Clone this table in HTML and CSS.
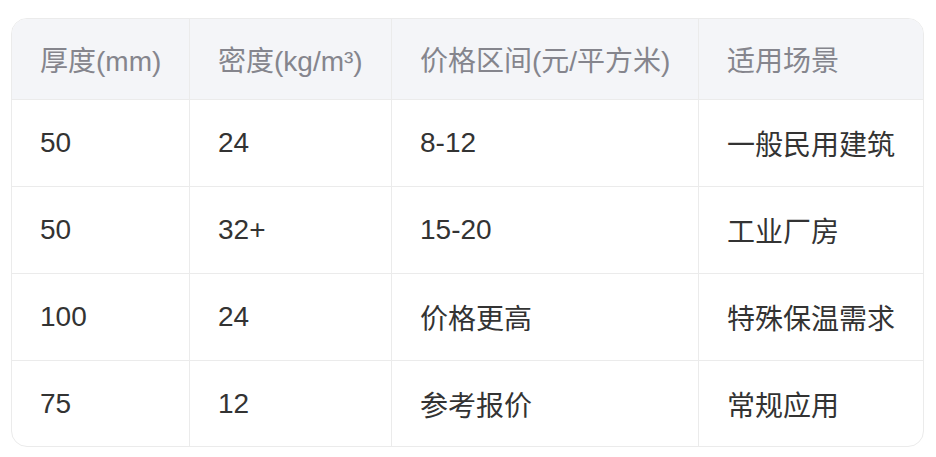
FILE: index.html
```html
<!DOCTYPE html>
<html lang="zh-CN">
<head>
<meta charset="utf-8">
<title>价格表</title>
<link rel="stylesheet" href="styles.css">
</head>
<body>
<div class="wrap">
  <div class="grid" role="table">
    <div class="cell head">厚度(mm)</div>
    <div class="cell head">密度(kg/m³)</div>
    <div class="cell head">价格区间(元/平方米)</div>
    <div class="cell head last-col">适用场景</div>

    <div class="cell">50</div>
    <div class="cell">24</div>
    <div class="cell">8-12</div>
    <div class="cell last-col">一般民用建筑</div>

    <div class="cell">50</div>
    <div class="cell">32+</div>
    <div class="cell">15-20</div>
    <div class="cell last-col">工业厂房</div>

    <div class="cell">100</div>
    <div class="cell">24</div>
    <div class="cell">价格更高</div>
    <div class="cell last-col">特殊保温需求</div>

    <div class="cell last-row">75</div>
    <div class="cell last-row">12</div>
    <div class="cell last-row">参考报价</div>
    <div class="cell last-row last-col">常规应用</div>
  </div>
</div>
</body>
</html>
```

FILE: styles.css
```css
* { box-sizing: border-box; }
html, body { margin: 0; padding: 0; background: #ffffff; }
body {
  font-family: "Liberation Sans", "Noto Sans CJK SC", sans-serif;
  font-size: 28px;
  color: #333333;
}
.wrap {
  margin: 18px 0 0 11px;
  width: 913px;
  height: 429px;
  border: 1px solid #ebebeb;
  border-radius: 16px;
  overflow: hidden;
}
.grid {
  display: grid;
  grid-template-columns: 178px 202px 307px 224px;
  grid-template-rows: 81px 87px 87px 87px 85px;
}
.cell {
  display: flex;
  align-items: center;
  padding-left: 28px;
  border-right: 1px solid #ebebeb;
  border-bottom: 1px solid #ebebeb;
  white-space: nowrap;
}
.head {
  background: #f4f5f8;
  color: #85858d;
}
.last-col { border-right: none; }
.last-row { border-bottom: none; }
```
